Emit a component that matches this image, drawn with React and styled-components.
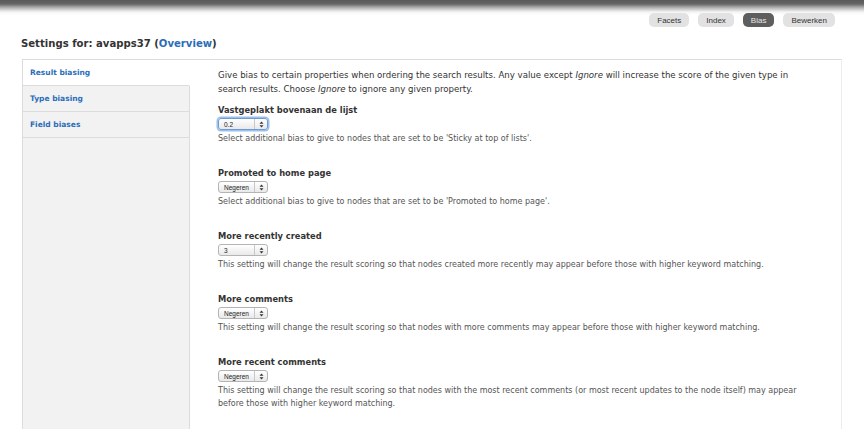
import React from 'react';
import styled, { createGlobalStyle } from 'styled-components';

const Global = createGlobalStyle`
  html, body { margin: 0; padding: 0; background: #fff; }
  body { font-family: "DejaVu Sans", "Noto Sans", sans-serif; color: #333; overflow: hidden; }
`;

const Page = styled.div`
  width: 864px;
  height: 429px;
  overflow: hidden;
  background: linear-gradient(to bottom, #5a5a5a 0px, #666 4px, #b8b8b8 8px, #f4f4f4 12px, #fff 15px) no-repeat;
  background-size: 100% 16px;
`;

const Toolbar = styled.div`
  display: flex;
  justify-content: flex-end;
  gap: 9px;
  padding: 13px 29px 0 0;
`;

const TabButton = styled.a`
  display: inline-flex;
  align-items: center;
  height: 14px;
  padding: 0 8px;
  border-radius: 5px;
  font-family: "Liberation Sans", Arial, sans-serif;
  font-size: 8px;
  color: ${p => (p.$active ? '#e6e6e6' : '#333')};
  background: ${p => (p.$active ? '#5e5e5e' : '#e2e2e2')};
  cursor: pointer;
`;

const Title = styled.h2`
  margin: 10px 0 8px 21px;
  font-size: 10.1px;
  line-height: 14px;
  font-weight: bold;
  color: #333;
`;

const Link = styled.a`
  color: #2b6db8;
  text-decoration: none;
`;

const Box = styled.div`
  display: flex;
  margin: 0 22px;
  min-height: 400px;
  border-top: 1px solid #dcdcdc;
  border-left: 1px solid #dcdcdc;
  border-right: 1px solid #ececec;
`;

const Sidebar = styled.div`
  width: 167px;
  display: flex;
  flex-direction: column;
  background: #f2f2f2;
`;

const SideTab = styled.a`
  display: flex;
  align-items: center;
  height: 25px;
  padding-left: 7px;
  border-bottom: 1px solid #dcdcdc;
  border-right: 1px solid ${p => (p.$active ? '#fff' : '#dcdcdc')};
  background: ${p => (p.$active ? '#fff' : 'transparent')};
  color: #2b6db8;
  font-size: 7.5px;
  font-weight: bold;
  cursor: pointer;
`;

const SideFill = styled.div`
  flex: 1;
  border-right: 1px solid #dcdcdc;
`;

const Content = styled.div`
  flex: 1;
  padding: 8px 28px 0 28px;
`;

const Intro = styled.p`
  margin: 0 0 8px;
  font-size: 8.6px;
  line-height: 14px;
  color: #333;
`;

const Item = styled.div`
  margin-bottom: 22px;
`;

const Label = styled.div`
  font-size: 8.3px;
  line-height: 12px;
  font-weight: bold;
  color: #333;
  margin-bottom: 2px;
`;

const Select = styled.div`
  display: flex;
  align-items: stretch;
  box-sizing: border-box;
  width: ${p => p.$width || 50}px;
  height: 12px;
  border: 1px solid ${p => (p.$focus ? '#6e9bd6' : '#b4b4b4')};
  border-radius: 3px;
  background: linear-gradient(to bottom, #fff, #e9e9e9);
  box-shadow: ${p => (p.$focus ? '0 0 0 1.5px #9cc0ee' : 'none')};
  font-family: "Liberation Sans", Arial, sans-serif;
  font-size: 6.5px;
  color: #222;
`;

const SelectText = styled.span`
  flex: 1;
  display: flex;
  align-items: center;
  padding-left: 5px;
`;

const SelectArrows = styled.span`
  width: 12px;
  display: flex;
  align-items: center;
  justify-content: center;
  border-left: 1px solid #c8c8c8;
`;

const Help = styled.div`
  margin-top: 2px;
  font-size: 8px;
  line-height: 13px;
  color: #555;
`;

const Arrows = () => (
  <svg width="5" height="7" viewBox="0 0 5 7">
    <path d="M2.5 0.5 L4.5 2.8 L0.5 2.8 Z" fill="#333" />
    <path d="M2.5 6.5 L4.5 4.2 L0.5 4.2 Z" fill="#333" />
  </svg>
);

const Dropdown = ({ value, focus }) => (
  <Select $focus={focus}>
    <SelectText>{value}</SelectText>
    <SelectArrows><Arrows /></SelectArrows>
  </Select>
);

const items = [
  { label: 'Vastgeplakt bovenaan de lijst', value: '0.2', focus: true, help: "Select additional bias to give to nodes that are set to be 'Sticky at top of lists'." },
  { label: 'Promoted to home page', value: 'Negeren', help: "Select additional bias to give to nodes that are set to be 'Promoted to home page'." },
  { label: 'More recently created', value: '3', help: 'This setting will change the result scoring so that nodes created more recently may appear before those with higher keyword matching.' },
  { label: 'More comments', value: 'Negeren', help: 'This setting will change the result scoring so that nodes with more comments may appear before those with higher keyword matching.' },
  { label: 'More recent comments', value: 'Negeren', help: 'This setting will change the result scoring so that nodes with the most recent comments (or most recent updates to the node itself) may appear before those with higher keyword matching.' },
];

export default function App() {
  return (
    <Page>
      <Global />
      <Toolbar>
        <TabButton>Facets</TabButton>
        <TabButton>Index</TabButton>
        <TabButton $active>Bias</TabButton>
        <TabButton>Bewerken</TabButton>
      </Toolbar>
      <Title>
        Settings for: avapps37 (<Link>Overview</Link>)
      </Title>
      <Box>
        <Sidebar>
          <SideTab $active>Result biasing</SideTab>
          <SideTab>Type biasing</SideTab>
          <SideTab>Field biases</SideTab>
          <SideFill />
        </Sidebar>
        <Content>
          <Intro>
            Give bias to certain properties when ordering the search results. Any value except <em>Ignore</em> will increase the score of the given type in search results. Choose <em>Ignore</em> to ignore any given property.
          </Intro>
          {items.map(it => (
            <Item key={it.label}>
              <Label>{it.label}</Label>
              <Dropdown value={it.value} focus={it.focus} />
              <Help>{it.help}</Help>
            </Item>
          ))}
        </Content>
      </Box>
    </Page>
  );
}
